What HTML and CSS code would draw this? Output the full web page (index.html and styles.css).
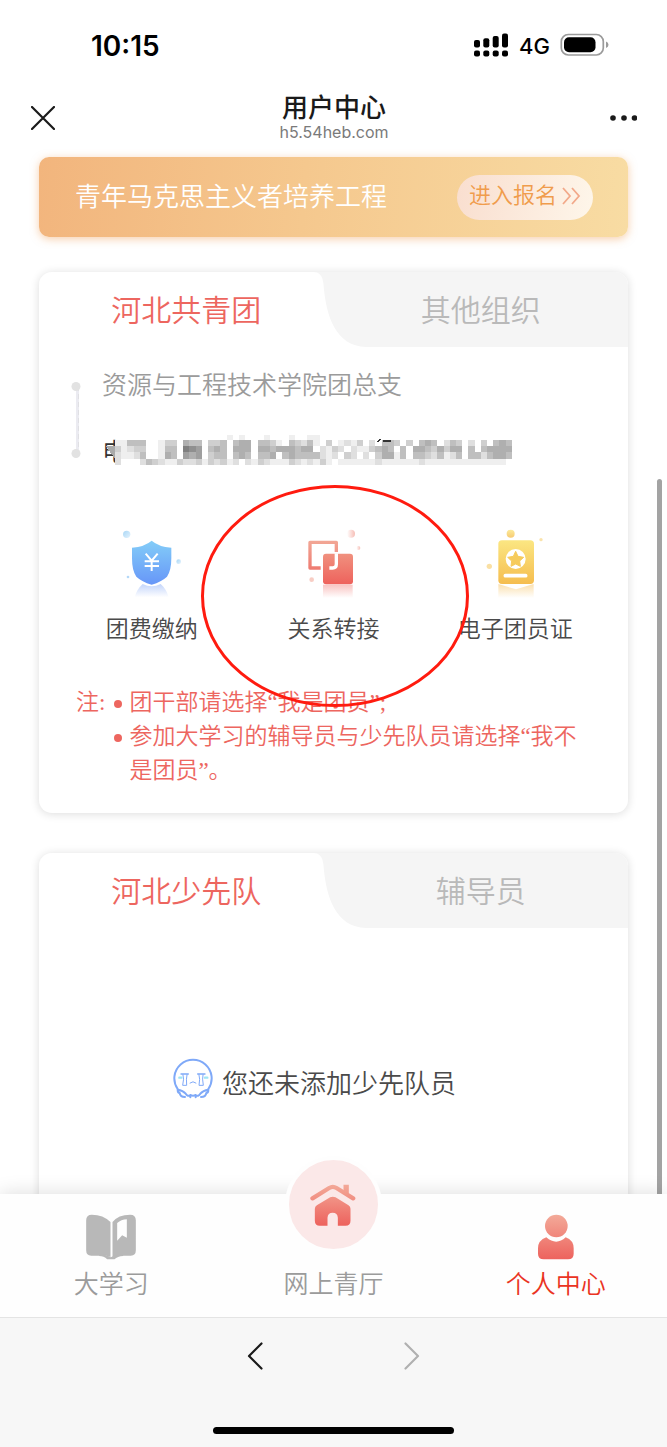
FILE: index.html
```html
<!DOCTYPE html>
<html lang="zh-CN">
<head>
<meta charset="utf-8">
<meta name="viewport" content="width=device-width, initial-scale=1">
<title>用户中心</title>
<link rel="stylesheet" href="styles.css">
</head>
<body>
<div class="app">
  <header>
    <div class="status">
      <span class="status-time">10:15</span>
      <div class="status-right">
        <svg width="35" height="24" viewBox="0 0 35 24" aria-hidden="true">
          <rect x="0" y="7" width="6" height="7.5" rx="2"/><rect x="9.3" y="5.2" width="6" height="9.3" rx="2"/><rect x="18.7" y="3" width="6" height="11.5" rx="2"/><rect x="28" y="0.5" width="6" height="14" rx="2"/>
          <rect x="0" y="17.5" width="6" height="6" rx="2"/><rect x="9.3" y="17.5" width="6" height="6" rx="2"/><rect x="18.7" y="17.5" width="6" height="6" rx="2"/><rect x="28" y="17.5" width="6" height="6" rx="2"/>
        </svg>
        <span class="status-net">4G</span>
        <svg width="49" height="24" viewBox="0 0 49 24" aria-hidden="true">
          <rect x="1.3" y="1.5" width="42" height="20.5" rx="7" fill="none" stroke="#9b9b9b" stroke-width="1.7"/>
          <rect x="4" y="4.2" width="31.5" height="15" rx="5"/>
          <path d="M46 8.500q2.500 1 2.500 3.300T46 15z" fill="#9b9b9b"/>
        </svg>
      </div>
    </div>
    <div class="nav">
      <button class="nav-btn" aria-label="关闭"><svg width="24" height="24" viewBox="0 0 24 24"><path d="M1 1l22 22M23 1L1 23" fill="none" stroke="#1a1a1a" stroke-width="2.200" stroke-linecap="round"/></svg></button>
      <div class="nav-title"><h1>用户中心</h1><p>h5.54heb.com</p></div>
      <button class="nav-btn nav-more" aria-label="更多"><svg width="28" height="8" viewBox="0 0 28 8" fill="#1a1a1a"><circle cx="4" cy="4" r="2.800"/><circle cx="15" cy="4" r="2.800"/><circle cx="25.500" cy="4" r="2.800"/></svg></button>
    </div>
  </header>

  <main>
    <section class="banner">
      <h2>青年马克思主义者培养工程</h2>
      <button class="enroll">进入报名<svg width="20" height="18" viewBox="0 0 20 18"><path d="M2 1l7 8-7 8M11 1l7 8-7 8" fill="none" stroke="#f2a98a" stroke-width="1.800"/></svg></button>
    </section>

    <section class="card">
      <div class="tabs">
        <button class="tab active">河北共青团</button>
        <button class="tab">其他组织</button>
        <svg class="tab-curve" width="54" height="75" viewBox="0 0 54 75"><path d="M0 0C6 0 9.500 3 10.500 12C13 45 23 74 53 75H0z" fill="#fff"/></svg>
      </div>
      <div class="org">
        <svg class="org-track" width="12" height="80" viewBox="0 0 12 80"><path d="M6.500 6V74" stroke="#ebebf1" stroke-width="3"/><path d="M7.500 6V74" stroke="#e0e0e4" stroke-width="1" stroke-dasharray="5 3"/><circle cx="5" cy="6.500" r="4.500" fill="#e2e2e2"/><circle cx="5" cy="73.500" r="4.500" fill="#e2e2e2"/></svg>
        <div class="org-lines">
          <p>资源与工程技术学院团总支</p>
          <p class="branch">电<svg class="mosaic" id="mosaic" width="410" height="34" viewBox="0 0 410 34" shape-rendering="crispEdges" aria-hidden="true"></svg></p>
        </div>
      </div>
      <div class="shortcuts">
        <a class="shortcut" href="#fee">
          <svg width="70" height="72" viewBox="81 54 210 216">
            <defs>
              <linearGradient id="blue" x1="0" y1="0" x2="0" y2="1"><stop offset="0" stop-color="#83cdf8"/><stop offset="1" stop-color="#6796f8"/></linearGradient>
              <linearGradient id="blueFade" x1="0" y1="0" x2="0" y2="1"><stop offset="0" stop-color="#c3d5fb"/><stop offset="1" stop-color="#fff"/></linearGradient>
              <linearGradient id="blueDot" x1="0" y1="0" x2="1" y2="1"><stop offset="0" stop-color="#a8d6f5"/><stop offset="1" stop-color="#e4f3fd"/></linearGradient>
            </defs>
            <circle cx="110" cy="73" r="11" fill="url(#blueDot)"/><circle cx="266" cy="155" r="7" fill="url(#blueDot)"/><circle cx="114" cy="201" r="4" fill="#b4d8f8"/>
            <path d="M134 262Q140 238 158 222Q185 236 212 222Q230 238 236 262z" fill="url(#blueFade)"/>
            <path d="M185 92Q206 110 244 113V145Q244 182 231 200Q215 215 185 224Q155 215 139 200Q126 182 126 145V113Q164 110 185 92z" fill="url(#blue)"/>
            <path d="M167 131l18 21 18-21M185 152v31M164 154h43M164 168h43" fill="none" stroke="#fff" stroke-width="6"/>
          </svg>
          <span>团费缴纳</span>
        </a>
        <a class="shortcut" href="#transfer">
          <svg width="70" height="72" viewBox="84 54 210 216">
            <defs>
              <linearGradient id="red" x1="0" y1="0" x2="0" y2="1"><stop offset="0" stop-color="#f0917f"/><stop offset="1" stop-color="#ee625c"/></linearGradient>
              <linearGradient id="redLine" gradientUnits="userSpaceOnUse" x1="0" y1="92" x2="0" y2="180"><stop offset="0" stop-color="#f2a796"/><stop offset="1" stop-color="#ee7a70"/></linearGradient>
              <linearGradient id="redFade" x1="0" y1="0" x2="0" y2="1"><stop offset="0" stop-color="#f9c4c2"/><stop offset="1" stop-color="#fff"/></linearGradient>
              <linearGradient id="redDot" x1="1" y1="0" x2="0" y2="0"><stop offset="0" stop-color="#f6bdb5"/><stop offset="1" stop-color="#fff"/></linearGradient>
            </defs>
            <circle cx="243" cy="71" r="12" fill="url(#redDot)"/><circle cx="265" cy="114" r="6" fill="url(#redDot)"/><circle cx="125" cy="209" r="7" fill="#f8cdc4"/>
            <rect x="159" y="224" width="89" height="40" fill="url(#redFade)"/>
            <path d="M152 174H120V97H199V126" fill="none" stroke="url(#redLine)" stroke-width="10" stroke-linejoin="round"/>
            <rect x="159" y="131" width="90" height="92" rx="9" fill="url(#red)"/>
            <path d="M199 130V163Q199 174 188 174H178" fill="none" stroke="#fff" stroke-width="10"/>
          </svg>
          <span>关系转接</span>
          <svg class="mark" width="270" height="224" viewBox="0 0 270 224" aria-hidden="true"><ellipse cx="135" cy="112" rx="132.500" ry="109.500" fill="none" stroke="#ff1b0f" stroke-width="3"/></svg>
        </a>
        <a class="shortcut" href="#card">
          <svg width="70" height="72" viewBox="91 54 210 216">
            <defs>
              <linearGradient id="gold" x1="0" y1="0" x2="0" y2="1"><stop offset="0" stop-color="#fbe682"/><stop offset="1" stop-color="#f5bd4f"/></linearGradient>
              <linearGradient id="goldFade" x1="0" y1="0" x2="0" y2="1"><stop offset="0" stop-color="#fbe0ae"/><stop offset="1" stop-color="#fff"/></linearGradient>
            </defs>
            <circle cx="183" cy="71" r="12" fill="url(#gold)" opacity=".8"/><circle cx="274" cy="89" r="5" fill="#fae3ac"/><circle cx="119" cy="169" r="8" fill="#fae0a4"/>
            <path d="M146 222L199 238L252 222V264H146z" fill="url(#goldFade)"/>
            <rect x="146" y="91" width="107" height="131" rx="11" fill="url(#gold)"/>
            <circle cx="198" cy="147" r="30" fill="#fff"/>
            <path d="M198 124l7 15 17 3-12 11 2 16-14-7-14 7 2-16-12-11 17-3z" fill="#f6cb5c" stroke="#f6cb5c" stroke-width="3" stroke-linejoin="round"/>
            <path d="M167 197h61" stroke="#fff" stroke-width="11" stroke-linecap="round"/>
          </svg>
          <span>电子团员证</span>
        </a>
      </div>
      <div class="note">
        <span>注:</span>
        <ul>
          <li>团干部请选择“我是团员”;</li>
          <li>参加大学习的辅导员与少先队员请选择“我不是团员”。</li>
        </ul>
      </div>
    </section>

    <section class="card">
      <div class="tabs">
        <button class="tab active">河北少先队</button>
        <button class="tab">辅导员</button>
        <svg class="tab-curve" width="54" height="75" viewBox="0 0 54 75"><path d="M0 0C6 0 9.500 3 10.500 12C13 45 23 74 53 75H0z" fill="#fff"/></svg>
      </div>
      <div class="empty">
        <svg width="40" height="42" viewBox="36 52 120 126" fill="none" stroke="#7fa9f8" stroke-width="6" stroke-linecap="round" stroke-linejoin="round">
          <path d="M50 148A56 56 0 1 1 142 148"/>
          <path d="M50 150Q50 160 56 160Q58 172 72 172M50 150Q66 152 74 162Q80 172 88 166Q96 170 104 166Q112 172 118 162Q126 152 142 150Q142 160 136 160Q134 172 120 172M88 166V173M104 166V173"/>
          <path d="M60 103H82M110 103H132" stroke-width="4"/>
          <path d="M66 105Q70 117 65 137H77Q75 117 78 105M114 105Q118 117 114 137H127Q123 117 126 105M87 130Q96 122 105 130" stroke-width="3"/>
          <path d="M55 114H61M132 114H139" stroke="#9fe6f5" stroke-width="7"/>
        </svg>
        <p>您还未添加少先队员</p>
      </div>
    </section>
    <div class="scroll-thumb"></div>
  </main>

  <nav class="tabbar">
    <a href="#study" class="tabbar-item">
      <svg width="52" height="46" viewBox="257 193 153 138" fill="#b8b8b8">
        <path d="M259 212Q259 195 276 195Q310 195 332 217V322Q315 315 298 318H274Q259 318 259 302z"/>
        <path fill-rule="evenodd" d="M338 217Q355 195 391 195Q408 195 408 212V302Q408 318 393 318H370Q352 316 338 322zM352 220V273L367 257L381 264V209Q364 210 352 220z"/>
        <path d="M298 314Q318 314 333 323Q348 314 370 314V319Q353 320 344 329H322Q312 319 298 319z"/>
      </svg>
      <span>大学习</span>
    </a>
    <a href="#hall" class="tabbar-item">
      <span class="home-disc">
        <svg width="46" height="42" viewBox="124 100 137 126">
          <defs><linearGradient id="home" gradientUnits="userSpaceOnUse" x1="0" y1="100" x2="0" y2="225"><stop offset="0" stop-color="#f3aa99"/><stop offset="1" stop-color="#ed625d"/></linearGradient></defs>
          <path d="M131 143L181 112Q192 105 203 112L253 143" fill="none" stroke="url(#home)" stroke-width="13" stroke-linecap="round"/>
          <path d="M224 102H240V130L224 120z" fill="url(#home)"/>
          <path d="M138 174Q138 168 144 164L184 140Q192 136 200 140L239 164Q245 168 245 174V210Q245 225 230 225H207V201Q206 186 191.500 186T176 201V225H153Q138 225 138 210z" fill="url(#home)"/>
        </svg>
      </span>
      <span>网上青厅</span>
    </a>
    <a href="#me" class="tabbar-item current">
      <svg width="38" height="46" viewBox="802 193 112 138">
        <defs><linearGradient id="me" gradientUnits="userSpaceOnUse" x1="0" y1="195" x2="0" y2="330"><stop offset="0" stop-color="#f3aa99"/><stop offset="1" stop-color="#ed625d"/></linearGradient></defs>
        <circle cx="859" cy="229" r="34" fill="url(#me)"/>
        <path d="M829 263Q859 289 887 263Q911 272 911 296V312Q911 329 894 329H821Q804 329 804 312V296Q804 272 829 263z" fill="url(#me)"/>
      </svg>
      <span>个人中心</span>
    </a>
  </nav>

  <footer>
    <div class="history">
      <button aria-label="后退"><svg width="16" height="28" viewBox="0 0 16 28"><path d="M14.500 1.500L2 14l12.500 12.500" fill="none" stroke="#1a1a1a" stroke-width="2.200" stroke-linecap="round" stroke-linejoin="round"/></svg></button>
      <button aria-label="前进"><svg width="16" height="28" viewBox="0 0 16 28"><path d="M1.500 1.500L14 14 1.500 26.500" fill="none" stroke="#b0b0b0" stroke-width="2.200" stroke-linecap="round" stroke-linejoin="round"/></svg></button>
    </div>
    <div class="home-bar"></div>
  </footer>
</div>
<script src="mosaic.js"></script>
</body>
</html>
```

FILE: mosaic.js
```js
// Covers the branch name with grey blocks; each digit is a darkness level.
const rows = [
  "0000000000000000001010001000100110000000000000000000000000000000",
  "1144400133054403340455044310432410301213020443030454024302030454",
  "3123300144087604540555055455545502132021134540405543535504045555",
  "2112400154065603440454044504544442120320203551404432412404424554",
  "2000243211322313231202132111321213101111112111111211111111111110"
];
const svg = document.getElementById("mosaic");
const ns = "http://www.w3.org/2000/svg";
const heights = [5, 6, 6, 7, 6];
const block = 6.2;
const add = (name, attrs) => {
  const node = document.createElementNS(ns, name);
  for (const key in attrs) node.setAttribute(key, attrs[key]);
  svg.appendChild(node);
};
add("rect", { x: 14, y: 0, width: 390, height: 34, fill: "#fff" });
add("path", { d: "M2 11H13V27z", fill: "#aaa" });
let y = 0;
rows.forEach((row, r) => {
  [...row].forEach((level, c) => {
    if (level !== "0") {
      const shade = 255 - level * 16;
      add("rect", { x: 11 + c * block, y, width: block, height: heights[r], fill: `rgb(${shade},${shade},${shade})` });
    }
  });
  y += heights[r];
});
add("path", { d: "M274 7l2-3M279 6h8", stroke: "#333", "stroke-width": 1.5 });
```

FILE: styles.css
```css
* { box-sizing: border-box; margin: 0; padding: 0; }
body { font-family: "Liberation Sans", "Noto Sans CJK SC", sans-serif; font-weight: 350; background: #fff; color: #4a4a4a; }
button { border: 0; background: none; font: inherit; color: inherit; }
a { color: inherit; text-decoration: none; }
svg { display: block; flex: none; }
.app { display: flex; flex-direction: column; height: 100vh; overflow: hidden; }

.status { display: flex; align-items: center; justify-content: space-between; height: 92px; padding: 0 58px 0 91px; font-family: Inter, sans-serif; color: #000; }
.status-time { font-size: 28px; line-height: 34px; font-weight: 600; }
.status-right { display: flex; align-items: center; gap: 10px; padding-bottom: 2px; }
.status-net { padding-top: 2px; font-size: 22px; line-height: 24px; font-weight: 500; }
.nav { display: flex; align-items: center; justify-content: space-between; height: 51px; padding: 0 30px 0 31px; }
.nav-btn { display: flex; align-items: center; width: 28px; height: 28px; }
.nav-title { text-align: center; color: #1a1a1a; }
.nav-title h1 { font-size: 26px; line-height: 31px; font-weight: 500; }
.nav-title p { padding-bottom: 2px; font-family: Inter, sans-serif; font-size: 16px; line-height: 17px; font-weight: 400; color: #7a7a7a; }

main { position: relative; flex: 1; min-height: 0; overflow: hidden; padding: 14px 39px 0; }
.banner { display: flex; align-items: center; justify-content: space-between; height: 80px; margin-bottom: 35px; padding: 0 35px 0 36px; border-radius: 10px; background: linear-gradient(95deg, #f2b57d, #f5c88e 45%, #f8dca3); box-shadow: 0 2px 8px rgba(240, 160, 90, .5); }
.banner h2 { padding-bottom: 1px; font-size: 26px; line-height: 34px; font-weight: 350; color: #fff; }
.enroll { display: flex; align-items: center; gap: 4px; height: 45px; padding: 0 12px 3px; border-radius: 23px; font-size: 22px; line-height: 30px; color: #f09c4c; background: linear-gradient(100deg, #f9decf, #fef6ea); }

.card { margin-bottom: 40px; border-radius: 13px; background: #fff; box-shadow: 0 1px 10px rgba(0, 0, 0, .14); }
.tabs { position: relative; display: grid; grid-template-columns: 1fr 1fr; height: 75px; border-radius: 13px 13px 0 0; overflow: hidden; background: #f5f5f5; }
.tab { padding-top: 3px; font-size: 30px; line-height: 42px; color: #b9b9b9; }
.tab.active { color: #ed665f; background: linear-gradient(#fff, #fff) no-repeat left / calc(100% - 20px) 100%; }
.tab-curve { position: absolute; left: calc(50% - 21px); top: 0; }

.org { display: flex; gap: 19px; padding: 21px 32px 0; }
.org-track { margin-top: 12px; }
.org-lines { display: grid; gap: 33px; font-size: 25px; line-height: 34px; color: #9b9b9b; }
.branch { position: relative; color: #333; }
.mosaic { position: absolute; left: 2px; top: 0; }

.shortcuts { display: grid; grid-template-columns: repeat(3, 1fr); margin-top: 59px; padding: 0 22px; }
.shortcut { position: relative; display: flex; flex-direction: column; align-items: center; gap: 13px; font-size: 23px; line-height: 32px; white-space: nowrap; }
.mark { position: absolute; z-index: 1; left: 50%; top: -44px; margin-left: -133px; pointer-events: none; }

.note { display: flex; gap: 9px; margin-top: 41px; padding: 0 37px 25px; font-family: "Liberation Serif", "Noto Sans CJK SC", serif; font-size: 23px; line-height: 34px; color: #ed665f; }
.note ul { flex: 1; list-style: none; }
.note li { position: relative; padding-left: 15px; }
.note li::before { content: ""; position: absolute; left: 0; top: 14px; width: 8px; height: 8px; border-radius: 50%; background: #ed665f; }

.empty { display: flex; justify-content: center; gap: 9px; padding: 129px 38px 149px 0; font-size: 26px; line-height: 42px; }
.empty p { padding-top: 6px; }
.scroll-thumb { position: absolute; right: 5px; top: 336px; bottom: 0; width: 5px; border-radius: 3px 3px 0 0; background: #a3a3a3; }

.tabbar { position: relative; display: grid; grid-template-columns: repeat(3, 1fr); height: 123px; padding-top: 20px; background: #fefefe; box-shadow: 0 -1px 18px rgba(0, 0, 0, .13); }
.tabbar-item { position: relative; display: flex; flex-direction: column; align-items: center; justify-content: space-between; padding-bottom: 16px; font-size: 25px; line-height: 34px; color: #9b9b9b; }
.tabbar-item span:last-child { margin-top: auto; }
.tabbar-item.current { color: #ea3323; }
.home-disc { position: absolute; top: -58px; display: flex; align-items: center; justify-content: center; width: 97px; height: 97px; border: 4px solid #fefefe; border-radius: 50%; background: #fbe8e8; }

footer { position: relative; display: flex; flex-direction: column; align-items: center; justify-content: space-between; height: 130px; padding: 24px 0 13px; border-top: 1px solid #e4e4e4; background: #f7f7f7; }
.history { display: flex; gap: 141px; }
.home-bar { width: 36%; height: 7px; border-radius: 4px; background: #000; }
```
